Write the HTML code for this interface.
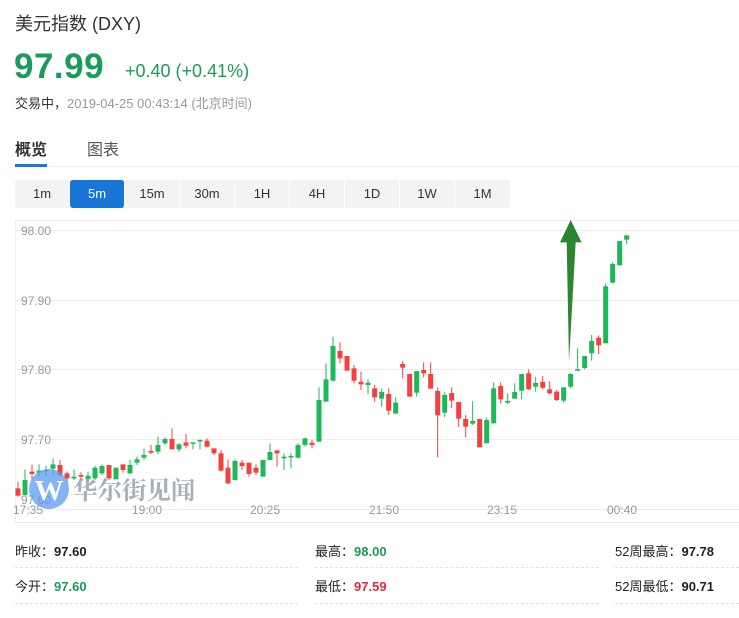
<!DOCTYPE html>
<html><head><meta charset="utf-8"><style>
*{margin:0;padding:0;box-sizing:border-box}
body{width:739px;height:618px;background:#fff;font-family:"Liberation Sans","Noto Sans CJK SC",sans-serif;position:relative;overflow:hidden;color:#333}
.a{position:absolute;white-space:nowrap}
.btns{position:absolute;left:15px;top:180px;width:495px;height:28px;background:#f2f3f5;border-radius:3px;display:flex}
.btns div{width:55px;height:28px;line-height:28px;text-align:center;font-size:13px;color:#333;border-right:1px solid #fff}
.btns .on{background:#1976d6;color:#fff;border-radius:3px}
.st{position:absolute;font-size:13px;color:#222}
.st b{font-weight:bold}
.dl{position:absolute;height:0;border-top:1px dashed #e2e2e2}
</style></head><body>
<div class="a" style="left:15px;top:10px;font-size:18px;color:#333">美元指数 (DXY)</div>
<div class="a" style="left:14px;top:47px;font-size:35px;font-weight:bold;color:#1a9b5b;letter-spacing:0.5px">97.99</div>
<div class="a" style="left:125px;top:61px;font-size:18px;color:#1a9b5b">+0.40 (+0.41%)</div>
<div class="a" style="left:15px;top:93px;font-size:13px;color:#333">交易中，<span style="color:#999">2019-04-25 00:43:14 (北京时间)</span></div>
<div class="a" style="left:15px;top:136px;font-size:16px;font-weight:bold;color:#333">概览</div>
<div class="a" style="left:87px;top:136px;font-size:16px;color:#555">图表</div>
<div class="a" style="left:15px;top:166px;width:724px;height:1px;background:#eee"></div>
<div class="a" style="left:15px;top:164px;width:32px;height:3px;background:#1976d6"></div>
<div class="btns"><div>1m</div><div class="on">5m</div><div>15m</div><div>30m</div><div>1H</div><div>4H</div><div>1D</div><div>1W</div><div style="border:0">1M</div></div>

<svg class="a" style="left:0;top:0" width="739" height="618">
<g stroke="#ececec" stroke-width="1">
<line x1="15.5" y1="220" x2="15.5" y2="522"/>
<line x1="15" y1="220.5" x2="739" y2="220.5"/>
<line x1="15" y1="230.5" x2="739" y2="230.5"/>
<line x1="15" y1="300.5" x2="739" y2="300.5"/>
<line x1="15" y1="369.5" x2="739" y2="369.5"/>
<line x1="15" y1="439.5" x2="739" y2="439.5"/>
<line x1="15" y1="509.5" x2="739" y2="509.5"/>
<line x1="15" y1="522.5" x2="739" y2="522.5"/>
</g>
<g font-size="12" fill="#999" font-family="Liberation Sans,sans-serif">
<text x="21" y="235">98.00</text><text x="21" y="305">97.90</text><text x="21" y="374">97.80</text><text x="21" y="444">97.70</text><text x="21" y="504">97.60</text>
<text x="13" y="514">17:35</text><text x="132" y="514">19:00</text><text x="250" y="514">20:25</text><text x="369" y="514">21:50</text><text x="487" y="514">23:15</text><text x="607" y="514">00:40</text>
</g>
<g id="cc"></g>
<circle cx="49" cy="489" r="20" fill="#5b9bf0" opacity="0.75"/>
<text x="49" y="500" text-anchor="middle" font-size="29" font-weight="bold" fill="#fff" font-family="Liberation Serif,serif">W</text>
<text x="73" y="499" font-size="24.5" font-weight="bold" fill="#9aa2ad" opacity="0.85" font-family="Noto Serif CJK SC,serif">华尔街见闻</text>
<polygon transform="translate(370,210) scale(0.33333)" points="602,30 635,97 617,97 597,455 590,97 570,97" fill="#2e8530"/>
</svg>
<script>
var a=[
[54,'r',475,497,455,500],[75,'g',450,495,418,497],[96,'r',425,432,403,450],[117,'g',422,428,403,440],[138,'g',420,424,408,438],[159,'g',403,416,385,438],[180,'r',405,435,390,440],[201,'r',430,445,425,460],[222,'g',440,445,418,450],[243,'r',435,440,427,450],[264,'g',437,448,425,455],[285,'g',413,445,408,450],[306,'g',408,430,403,435],[327,'r',405,445,405,450],[348,'g',413,448,413,448],[369,'r',403,420,403,428],[390,'g',405,430,390,432],[411,'g',388,398,380,405],[432,'g',375,383,355,390],[453,'r',363,368,345,372],[474,'g',345,365,320,372],[495,'g',327,340,322,345],[516,'r',327,358,295,358],[537,'g',343,358,340,365],[558,'r',337,347,312,355],[579,'g',337,340,337,358],[600,'g',330,333,328,358],[621,'r',332,350,325,352],[642,'r',355,370,355,375],[663,'r',370,422,360,425],[684,'r',413,460,388,462],[705,'g',393,450,388,452],[726,'r',398,408,390,420],[747,'r',398,432,398,440],[768,'r',413,428,403,435],[789,'g',390,440,390,440],[810,'g',366,390,340,390],[831,'r',361,370,361,410],[852,'g',380,385,370,420],[873,'g',378,380,370,415],[894,'g',345,383,340,385],[915,'g',325,345,323,350],[936,'r',338,345,330,355],[957,'g',210,335,172,335],[978,'g',148,215,100,215],[999,'g',48,152,20,155],[1020,'r',63,85,37,100],[1041,'r',78,122,78,122],[1062,'r',115,152,105,160],[1083,'r',155,163,125,180],[1104,'g',158,165,148,192]];
var b=[
[14,'r',535,562,525,575],[35,'g',546,566,535,590],[56,'r',552,602,535,615],[77,'g',578,611,562,611],[98,'r',462,473,453,505],[119,'r',492,560,492,560],[140,'g',483,548,483,560],[161,'r',480,490,457,502],[182,'r',492,536,457,536],[203,'r',543,616,532,742],[224,'g',555,608,547,622],[245,'r',549,572,532,595],[266,'r',576,626,576,652],[287,'r',627,650,615,682],[308,'g',633,641,574,645],[329,'r',627,712,627,712],[350,'g',630,700,622,700],[371,'g',535,640,517,640],[392,'r',528,568,517,580],[413,'g',573,578,550,582],[434,'g',546,566,520,566],[455,'g',492,542,492,568],[476,'r',490,538,478,540],[497,'g',519,530,500,545],[518,'r',516,533,498,538],[539,'r',538,550,514,552],[560,'r',545,570,540,573],[581,'g',532,572,532,578],[602,'g',492,530,490,535],[623,'g',478,482,415,482],[644,'g',438,474,438,478],[665,'g',393,430,375,452],[686,'r',383,406,376,432],[707,'g',229,400,220,400],[728,'g',162,218,157,220],[749,'g',93,166,93,166],[770,'g',76,89,76,103]];
var s='';
function add(arr,ox,oy){arr.forEach(function(c){var x=ox+c[0]/3,col=c[1]=='g'?'#1fb857':'#f5403f';var t=oy+c[2]/3,bt=oy+c[3]/3;if(bt-t<1.5)bt=t+1.5;
s+='<line x1="'+x+'" x2="'+x+'" y1="'+(oy+c[4]/3)+'" y2="'+(oy+c[5]/3)+'" stroke="'+col+'" stroke-width="1"/>';
s+='<rect x="'+(x-2.5)+'" y="'+t+'" width="5" height="'+(bt-t)+'" fill="'+col+'"/>';});}
add(a,0,330);add(b,370,210);
document.getElementById('cc').outerHTML=s;
</script>

<div class="st" style="left:15px;top:541px">昨收：<b>97.60</b></div>
<div class="st" style="left:315px;top:541px">最高：<b style="color:#1a9b5b">98.00</b></div>
<div class="st" style="left:615px;top:541px">52周最高：<b>97.78</b></div>
<div class="st" style="left:15px;top:576px">今开：<b style="color:#1a9b5b">97.60</b></div>
<div class="st" style="left:315px;top:576px">最低：<b style="color:#e8243c">97.59</b></div>
<div class="st" style="left:615px;top:576px">52周最低：<b>90.71</b></div>
<div class="dl" style="left:15px;top:567px;width:283px"></div>
<div class="dl" style="left:315px;top:567px;width:284px"></div>
<div class="dl" style="left:615px;top:567px;width:124px"></div>
<div class="dl" style="left:15px;top:603px;width:283px"></div>
<div class="dl" style="left:315px;top:603px;width:284px"></div>
<div class="dl" style="left:615px;top:603px;width:124px"></div>
</body></html>
